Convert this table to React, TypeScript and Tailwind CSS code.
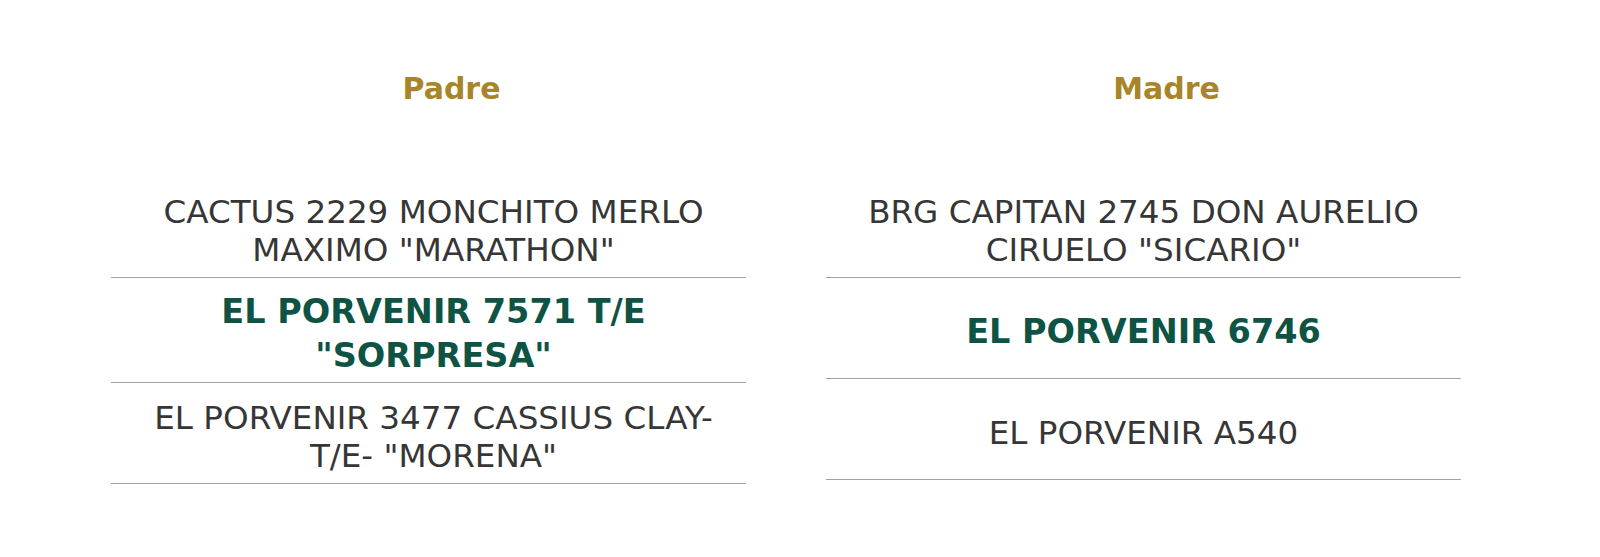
const padre = {
  title: 'Padre',
  rows: [
    { lines: ['CACTUS 2229 MONCHITO MERLO', 'MAXIMO "MARATHON"'], strong: false },
    { lines: ['EL PORVENIR 7571 T/E', '"SORPRESA"'], strong: true },
    { lines: ['EL PORVENIR 3477 CASSIUS CLAY-', 'T/E- "MORENA"'], strong: false },
  ],
};

const madre = {
  title: 'Madre',
  rows: [
    { lines: ['BRG CAPITAN 2745 DON AURELIO', 'CIRUELO "SICARIO"'], strong: false },
    { lines: ['EL PORVENIR 6746'], strong: true },
    { lines: ['EL PORVENIR A540'], strong: false },
  ],
};

type Parent = typeof padre;

function Column({ data, shift }: { data: Parent; shift?: boolean }) {
  return (
    <div className="w-[635px] flex flex-col">
      <h2 className="pl-[46px] text-center text-[30px] leading-[40px] font-bold text-[#a88527] mb-[68px]">
        {data.title}
      </h2>
      {data.rows.map((row, i) => (
        <div
          key={i}
          className={`min-h-[101px] flex flex-col items-center justify-center text-center border-b border-[#a3a3a3] pt-[12px] pb-[4px] ${shift ? 'pl-[10px]' : ''}`}
        >
          {row.lines.map((l, j) => (
            <div
              key={j}
              className={
                row.strong
                  ? 'text-[33.5px] leading-[44px] font-bold text-[#0e5343]'
                  : 'text-[32.6px] leading-[38px] text-[#363636]'
              }
            >
              {l}
            </div>
          ))}
        </div>
      ))}
    </div>
  );
}

export default function App() {
  return (
    <div
      className="w-[1600px] h-[557px] bg-white flex gap-[80px] pl-[111px] pt-[69px]"
      style={{ fontFamily: '"DejaVu Sans", sans-serif' }}
    >
      <Column data={padre} shift />
      <Column data={madre} />
    </div>
  );
}
